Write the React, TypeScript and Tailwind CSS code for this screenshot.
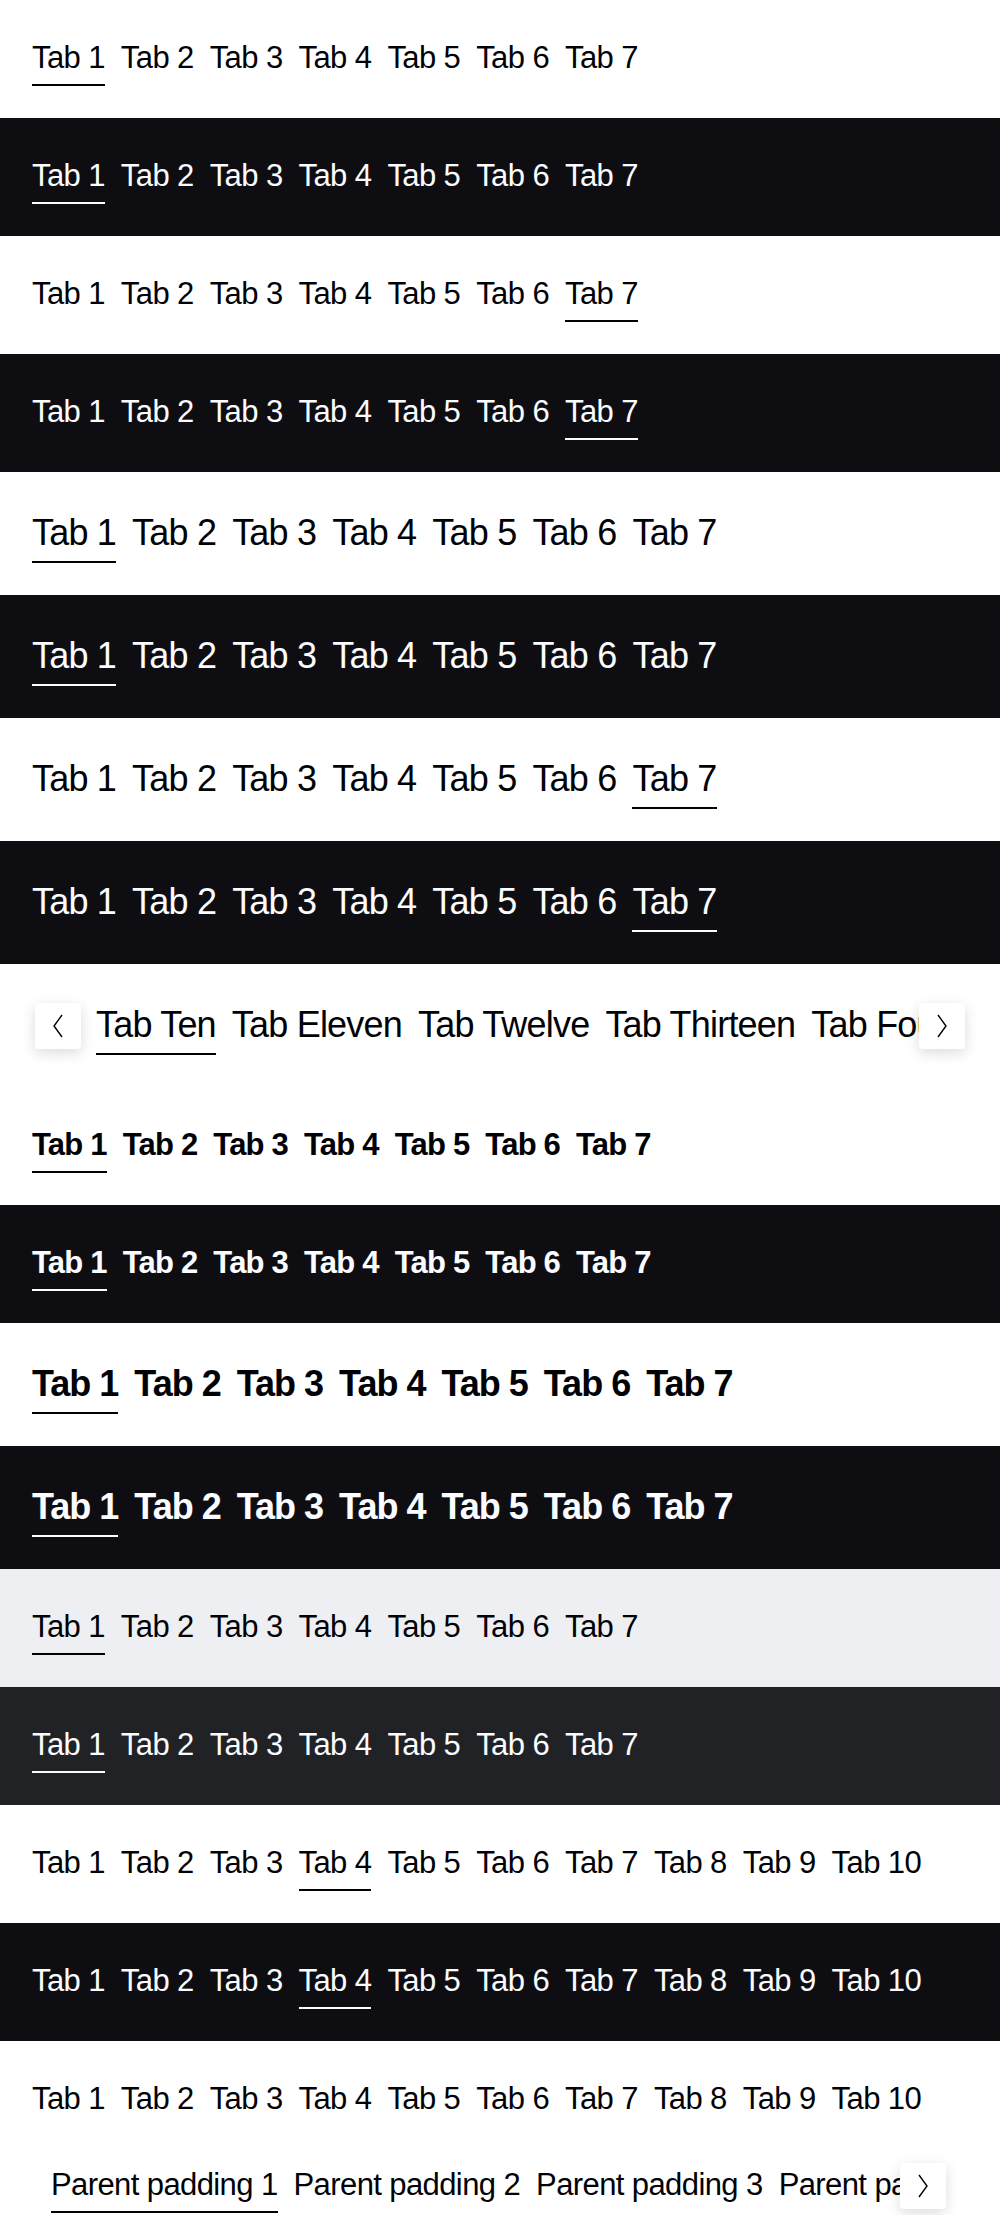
import React from 'react';

type Theme = 'light' | 'dark' | 'lightGray' | 'darkGray';

const FONT = { fontFamily: '"Liberation Sans", Arial, sans-serif' };

const bgClass: Record<Theme, string> = {
  light: 'bg-white text-[#010205]',
  dark: 'bg-[#0e0e12] text-[#fbfcff]',
  lightGray: 'bg-[#eeeff2] text-[#010205]',
  darkGray: 'bg-[#212225] text-[#fbfcff]',
};

const barClass: Record<Theme, string> = {
  light: 'border-[#010205]',
  dark: 'border-[#fbfcff]',
  lightGray: 'border-[#010205]',
  darkGray: 'border-[#fbfcff]',
};

const seven = ['Tab 1', 'Tab 2', 'Tab 3', 'Tab 4', 'Tab 5', 'Tab 6', 'Tab 7'];
const ten = [...seven, 'Tab 8', 'Tab 9', 'Tab 10'];

function Chevron({ dir }: { dir: 'left' | 'right' }) {
  return (
    <svg width="12" height="24" viewBox="0 0 12 24" fill="none" stroke="#010205" strokeWidth="1.4">
      {dir === 'left' ? <polyline points="10,1 2,12 10,23" /> : <polyline points="2,1 10,12 2,23" />}
    </svg>
  );
}

function ScrollButton({ dir, className }: { dir: 'left' | 'right'; className: string }) {
  return (
    <button
      className={`absolute top-1/2 -translate-y-1/2 w-[46px] h-[46px] bg-white rounded-[4px] shadow-[0_4px_14px_rgba(0,0,0,0.14)] flex items-center justify-center ${className}`}
    >
      <Chevron dir={dir} />
    </button>
  );
}

// the original face is a narrow grotesk, so size + tracking are tuned to keep its tab widths
const textStyle = {
  small: {
    regular: 'text-[31px] leading-[44px] tracking-[-0.6px] font-normal',
    bold: 'text-[31px] leading-[44px] tracking-[-0.8px] font-bold',
  },
  medium: {
    regular: 'text-[36px] leading-[49px] tracking-[-0.8px] font-normal',
    bold: 'text-[36px] leading-[49px] tracking-[-1px] font-bold',
  },
};

function Tabs({
  items,
  active,
  size = 'small',
  bold = false,
  theme = 'light',
}: {
  items: string[];
  active: number;
  size?: 'small' | 'medium';
  bold?: boolean;
  theme?: Theme;
}) {
  const text = textStyle[size][bold ? 'bold' : 'regular'];
  return (
    <div className="flex gap-4 whitespace-nowrap">
      {items.map((t, i) => (
        <button
          key={t}
          className={`pt-1 pb-1 border-b-2 ${text} ${i === active ? barClass[theme] : 'border-transparent'}`}
        >
          {t}
        </button>
      ))}
    </div>
  );
}

function Band({ theme, children }: { theme: Theme; children: React.ReactNode }) {
  return <div className={`px-8 py-8 ${bgClass[theme]}`}>{children}</div>;
}

export default function App() {
  return (
    <div className="w-[1000px] bg-white overflow-hidden" style={FONT}>
      <Band theme="light"><Tabs items={seven} active={0} /></Band>
      <Band theme="dark"><Tabs items={seven} active={0} theme="dark" /></Band>
      <Band theme="light"><Tabs items={seven} active={6} /></Band>
      <Band theme="dark"><Tabs items={seven} active={6} theme="dark" /></Band>
      <Band theme="light"><Tabs items={seven} active={0} size="medium" /></Band>
      <Band theme="dark"><Tabs items={seven} active={0} size="medium" theme="dark" /></Band>
      <Band theme="light"><Tabs items={seven} active={6} size="medium" /></Band>
      <Band theme="dark"><Tabs items={seven} active={6} size="medium" theme="dark" /></Band>

      {/* scrollable bar, scrolled so the left arrow shows */}
      <Band theme="light">
        <div className="relative">
          <div className="overflow-hidden mr-[3px] pl-[64px]">
            <Tabs
              items={['Tab Ten', 'Tab Eleven', 'Tab Twelve', 'Tab Thirteen', 'Tab Fourteen', 'Tab Fifteen']}
              active={0}
              size="medium"
            />
          </div>
          <ScrollButton dir="left" className="left-[3px]" />
          <ScrollButton dir="right" className="right-[3px]" />
        </div>
      </Band>

      <Band theme="light"><Tabs items={seven} active={0} bold /></Band>
      <Band theme="dark"><Tabs items={seven} active={0} bold theme="dark" /></Band>
      <Band theme="light"><Tabs items={seven} active={0} bold size="medium" /></Band>
      <Band theme="dark"><Tabs items={seven} active={0} bold size="medium" theme="dark" /></Band>
      <Band theme="lightGray"><Tabs items={seven} active={0} theme="lightGray" /></Band>
      <Band theme="darkGray"><Tabs items={seven} active={0} theme="darkGray" /></Band>
      <Band theme="light"><Tabs items={ten} active={3} /></Band>
      <Band theme="dark"><Tabs items={ten} active={3} theme="dark" /></Band>
      <Band theme="light"><Tabs items={ten} active={-1} /></Band>

      <div className="px-[51px] pb-8 bg-white text-[#010205]">
        <div className="relative">
          <div className="overflow-hidden mr-[3px]">
            <Tabs
              items={['Parent padding 1', 'Parent padding 2', 'Parent padding 3', 'Parent padding 4']}
              active={0}
            />
          </div>
          <ScrollButton dir="right" className="right-[3px]" />
        </div>
      </div>
    </div>
  );
}
